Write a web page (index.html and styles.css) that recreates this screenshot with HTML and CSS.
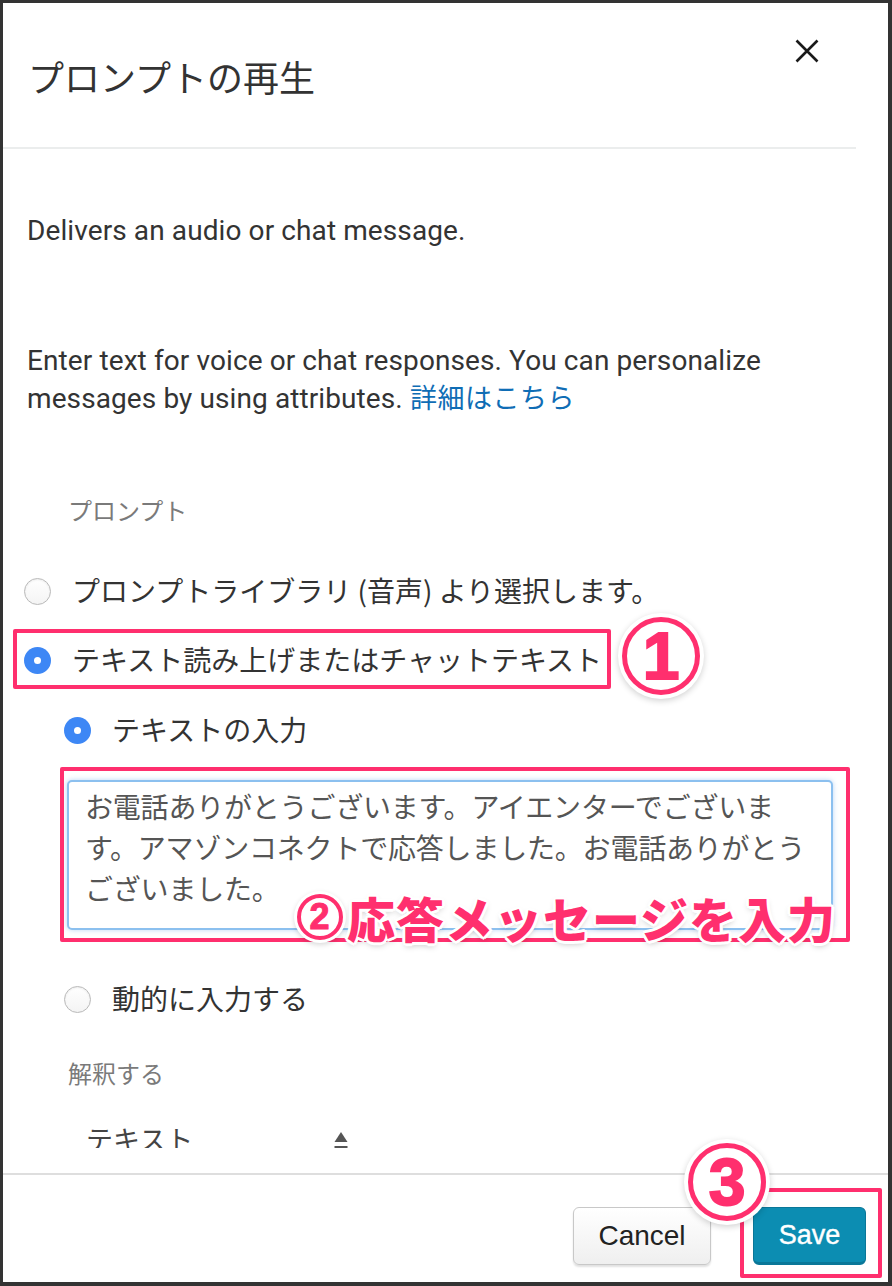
FILE: index.html
```html
<!DOCTYPE html>
<html lang="ja">
<head>
<meta charset="utf-8">
<title>プロンプトの再生</title>
<link rel="stylesheet" href="styles.css">
</head>
<body>
<div class="dialog">
  <header class="header">
    <h1 class="title">プロンプトの再生</h1>
    <button class="close" aria-label="close">
      <svg width="24" height="24" viewBox="0 0 24 24"><path d="M1.5 1.5 L22.5 22.5 M22.5 1.5 L1.5 22.5" stroke="#1a1a1a" stroke-width="2.6" fill="none"/></svg>
    </button>
  </header>
  <div class="divider"></div>

  <main class="content">
    <p class="desc">Delivers an audio or chat message.</p>
    <p class="help">Enter text for voice or chat responses. You can personalize messages by using attributes. <a class="link">詳細はこちら</a></p>

    <div class="label">プロンプト</div>

    <div class="radio-row row1"><span class="radio"></span><span class="rlabel">プロンプトライブラリ (音声) より選択します。</span></div>
    <div class="radio-row row2"><span class="radio checked"></span><span class="rlabel">テキスト読み上げまたはチャットテキスト</span></div>
    <div class="radio-row row3 indent"><span class="radio checked"></span><span class="rlabel">テキストの入力</span></div>

    <textarea class="msg">お電話ありがとうございます。アイエンターでございます。アマゾンコネクトで応答しました。お電話ありがとうございました。</textarea>

    <div class="radio-row row4 indent"><span class="radio"></span><span class="rlabel">動的に入力する</span></div>

    <div class="label label2">解釈する</div>

    <div class="select"><span>テキスト</span>
      <svg class="sort" width="14" height="20" viewBox="0 0 14 20"><path d="M7 0 L13.5 10 L0.5 10 Z" fill="#555"/><rect x="0.5" y="14" width="13" height="3" fill="#555"/></svg>
    </div>
  </main>

  <footer class="footer">
    <button class="btn cancel">Cancel</button>
    <button class="btn save">Save</button>
  </footer>

  <div class="mark box1"></div>
  <div class="num num1">1</div>
  <div class="mark box2"></div>
  <div class="note"><span class="num num2">2</span>応答メッセージを入力</div>
  <div class="mark box3"></div>
  <div class="num num3">3</div>
</div>
</body>
</html>
```

FILE: styles.css
```css
html, body {
  margin: 0;
  padding: 0;
  background: #333333;
}
body {
  width: 892px;
  height: 1286px;
  overflow: hidden;
  font-family: "Noto Sans CJK JP", sans-serif;
  color: #333;
}
.dialog {
  position: relative;
  margin: 3px 4px 4px 3px;
  width: 885px;
  height: 1279px;
  background: #fff;
  display: flex;
  flex-direction: column;
  overflow: hidden;
}
.header {
  height: 144px;
  flex: none;
  display: flex;
  align-items: flex-start;
  justify-content: space-between;
}
.title {
  margin: 51px 0 0 25px;
  font-size: 36px;
  line-height: 44px;
  font-weight: 400;
  color: #333;
}
.close {
  margin: 36px 69px 0 0;
  padding: 0;
  border: 0;
  background: none;
  width: 24px;
  height: 24px;
}
.close svg { display: block; }
.divider {
  flex: none;
  height: 2px;
  margin-right: 32px;
  background: #ebeded;
}
.content {
  flex: none;
  height: 999px;
  overflow: hidden;
  padding-left: 21px;
  display: flex;
  flex-direction: column;
  align-items: flex-start;
}
.content > * { flex-shrink: 0; }
.desc, .help {
  margin: 0 0 0 3px;
  font-family: "Roboto", "Noto Sans CJK JP", sans-serif;
  font-size: 28px;
  letter-spacing: 0.1px;
  color: #333;
}
.desc {
  margin-top: 62px;
  line-height: 40px;
}
.help {
  margin-top: 91px;
  line-height: 38px;
  width: 800px;
}
.link {
  color: #0f6db5;
  font-family: "Noto Sans CJK JP", sans-serif;
  font-size: 27px;
  letter-spacing: 0.5px;
  line-height: 1;
}
.label {
  margin: 75px 0 0 44px;
  font-size: 24px;
  line-height: 34px;
  color: #7a7a7a;
}
.label2 { margin-top: 36px; }
.radio-row {
  height: 40px;
  display: flex;
  align-items: center;
  gap: 21px;
  font-size: 28px;
  color: #333;
}
.row1 { margin-top: 45px; }
.row2 { margin-top: 29px; }
.row3 { margin-top: 30px; }
.row4 { margin-top: 50px; }
.indent { margin-left: 40px; }
.radio {
  width: 27px;
  height: 27px;
  box-sizing: border-box;
  border-radius: 50%;
  border: 1px solid #b9b9b9;
  background: linear-gradient(#ffffff, #f4f4f4);
  box-shadow: inset 0 1px 2px rgba(0,0,0,0.08);
  position: relative;
  flex: none;
  margin-top: -2px;
}
.radio.checked {
  border: 0;
  background: #3d87f5;
  box-shadow: none;
}
.radio.checked::after {
  content: "";
  position: absolute;
  left: 10px;
  top: 10px;
  width: 7px;
  height: 7px;
  border-radius: 50%;
  background: #fff;
}
.rlabel { line-height: 40px; margin-top: -4px; }
.msg {
  margin: 29px 0 0 43px;
  width: 766px;
  height: 150px;
  box-sizing: border-box;
  padding: 4px 16px 0 16px;
  border: 2px solid #8cc0ef;
  border-radius: 5px;
  box-shadow: 0 0 5px rgba(100, 160, 230, 0.45);
  font-family: "Noto Sans CJK JP", sans-serif;
  font-size: 28px;
  letter-spacing: -0.2px;
  line-height: 41px;
  color: #555;
  resize: both;
  outline: none;
}
.select {
  margin: 28px 0 0 62px;
  width: 262px;
  height: 40px;
  display: flex;
  align-items: center;
  justify-content: space-between;
  font-size: 27px;
  color: #444;
}
.sort { margin-top: 8px; }
.footer {
  flex: none;
  margin-top: 25px;
  border-top: 2px solid #dedede;
  padding: 32px 22px 0 0;
  display: flex;
  justify-content: flex-end;
  gap: 42px;
}
.btn {
  height: 58px;
  box-sizing: border-box;
  border-radius: 6px;
  font-family: "Liberation Sans", Arial, sans-serif;
  padding: 0;
}
.cancel {
  width: 138px;
  border: 1px solid #c8c8c8;
  background: linear-gradient(#ffffff, #efefef);
  box-shadow: 0 2px 2px rgba(0,0,0,0.12);
  font-size: 28px;
  color: #222;
}
.save {
  width: 113px;
  border: 1px solid #0a7798;
  border-bottom-width: 3px;
  background: #0c8db2;
  font-size: 27px;
  color: #fff;
  -webkit-text-stroke: 0.4px #fff;
}

/* annotations */
.mark {
  position: absolute;
  box-sizing: border-box;
  border: 4px solid #ff2f6e;
  border-radius: 2px;
  box-shadow: 0 0 2px rgba(255,255,255,0.8);
}
.box1 { left: 10px; top: 626px; width: 598px; height: 60px; }
.box2 { left: 57px; top: 764px; width: 790px; height: 175px; }
.box3 { left: 737px; top: 1185px; width: 142px; height: 90px; }
.num {
  position: absolute;
  box-sizing: border-box;
  border-radius: 50%;
  border: 5px solid #ff2f6e;
  background: #fff;
  box-shadow: 0 0 0 4px #fff, 0 2px 6px 4px rgba(0,0,0,0.18);
  color: #ff2f6e;
  font-family: "Liberation Sans", Arial, sans-serif;
  font-weight: 700;
  text-align: center;
  display: flex;
  align-items: center;
  justify-content: center;
}
.num1 {
  left: 619px; top: 614px; width: 78px; height: 78px;
  font-size: 66px;
  -webkit-text-stroke: 2px #ff2f6e;
}
.num3 {
  left: 685px; top: 1140px; width: 78px; height: 78px;
  font-size: 66px;
  -webkit-text-stroke: 2px #ff2f6e;
}
.note {
  position: absolute;
  left: 294px;
  top: 884px;
  display: flex;
  align-items: center;
  font-size: 48px;
  line-height: 60px;
  font-weight: 900;
  color: #ff2f6e;
  letter-spacing: 1px;
  text-shadow:
    3px 0 0 #fff, -3px 0 0 #fff, 0 3px 0 #fff, 0 -3px 0 #fff,
    2px 2px 0 #fff, -2px -2px 0 #fff, 2px -2px 0 #fff, -2px 2px 0 #fff,
    0 3px 6px rgba(0,0,0,0.25);
}
.num2 {
  position: static;
  width: 46px;
  height: 46px;
  border-width: 4px;
  font-size: 36px;
  margin-right: 4px;
  box-shadow: 0 0 0 3px #fff, 0 2px 5px 3px rgba(0,0,0,0.15);
  text-shadow: none;
  -webkit-text-stroke: 1px #ff2f6e;
}
```
